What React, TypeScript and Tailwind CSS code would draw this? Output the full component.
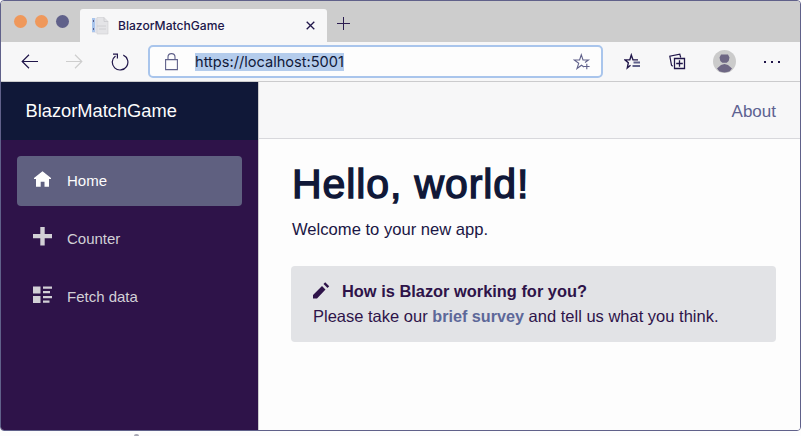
import React from "react";

const helv = "font-['Liberation_Sans',Arial,sans-serif]";
const ui = "font-['Inter',sans-serif]";

function TitleBar() {
  return (
    <div className="flex h-[41px] items-end bg-[#cdcdcd]">
      <div className="flex h-full w-[79px] items-start gap-[8px] pl-[13px] pt-[14px]">
        <span className="h-[13px] w-[13px] rounded-full bg-[#ef985b]" />
        <span className="h-[13px] w-[13px] rounded-full bg-[#ef985b]" />
        <span className="h-[13px] w-[13px] rounded-full bg-[#60618a]" />
      </div>
      <div className="flex h-[33px] w-[247px] items-center rounded-t-[3px] bg-[#f7f7f8]">
        <svg className="ml-[12px] h-[18px] w-[17px] shrink-0" viewBox="0 0 17 18">
          <path d="M0 1h8v15H0z" fill="#e3e4ec" />
          <path d="M0 1h3v14H0z" fill="#a9c5ec" />
          <path d="M1 3h1v2H1zM1 11h1v2H1z" fill="#60618a" />
          <path d="M5 .5h7l4 4V17H5z" fill="#e4e4e7" stroke="#d2d2d5" strokeWidth=".7" />
          <path d="M12 .5v4h4M5 9h9M7 12h7" fill="none" stroke="#c9c9ce" strokeWidth=".8" />
        </svg>
        <span className={`${ui} ml-[9px] whitespace-nowrap text-[12.1px] font-medium leading-[16px] text-[#20164a]`}>
          BlazorMatchGame
        </span>
        <svg className="ml-auto mr-[12px] h-[9px] w-[9px] shrink-0" viewBox="0 0 9 9">
          <path d="M.7.7l7.6 7.6M8.3.7L.7 8.3" stroke="#20164a" strokeWidth="1.3" />
        </svg>
      </div>
      <svg className="mb-[12px] ml-[10px] h-[13px] w-[13px]" viewBox="0 0 13 13">
        <path d="M6.5 0v13M0 6.5h13" stroke="#2b1c50" strokeWidth="1" />
      </svg>
    </div>
  );
}

function Toolbar() {
  return (
    <div className="flex h-[40px] items-center border-b border-[#cbcbcd] bg-[#f7f7f8]">
      <svg className="ml-[20px] h-[15px] w-[17px] shrink-0" viewBox="0 0 17 15">
        <path d="M8 .8L1.2 7.5 8 14.2M1.2 7.5H17" fill="none" stroke="#20164a" strokeWidth="1.2" />
      </svg>
      <svg className="ml-[28px] h-[15px] w-[17px] shrink-0" viewBox="0 0 17 15">
        <path d="M9 .8l6.8 6.7L9 14.2M15.8 7.5H0" fill="none" stroke="#cecece" strokeWidth="1.2" />
      </svg>
      <svg className="ml-[28px] h-[18px] w-[18px] shrink-0" viewBox="0 0 18 18">
        <path d="M12.3 2.1A7.8 7.8 0 1 1 4.5 2.9M2 1.1h4.4v4.3" fill="none" stroke="#20164a" strokeWidth="1.2" />
      </svg>
      <div className="ml-[19px] flex h-[33px] w-[455px] shrink-0 items-center rounded-[5px] border-2 border-[#a9c5ec] bg-[#fdfdfd]">
        <svg className="ml-[15px] h-[18px] w-[13px] shrink-0" viewBox="0 0 13 18">
          <path d="M.6 6.6h11.8v10H.6zM3 6.6V4.1a3.5 3.5 0 0 1 7 0v2.5" fill="none" stroke="#60618a" strokeWidth="1.1" />
        </svg>
        <span className={`${ui} ml-[17px] whitespace-nowrap bg-[#b4ccec] text-[14.6px] leading-[18px] text-[#101838]`}>
          https://localhost:5001
        </span>
        <svg className="ml-auto mr-[10px] h-[17px] w-[18px] shrink-0" viewBox="0 0 18 17">
          <path d="M11 14l-2.5-1.8L4 15.5l1.7-5.2L1.2 7h5.4L8.3 1.8 10 7h5.4L12 9.5" fill="none" stroke="#60618a" strokeWidth="1.1" />
          <path d="M13.8 10.7v5.6M11 13.5h5.6" stroke="#60618a" strokeWidth="1.1" />
        </svg>
      </div>
      <svg className="ml-[21px] h-[17px] w-[17px] shrink-0" viewBox="0 0 17 17">
        <path d="M6.5 12.2L3.3 15l1-5.2L1 6.9h4.8L7.3 2l1.7 4.9H14" fill="none" stroke="#20164a" strokeWidth="1.4" />
        <path d="M9.5 9.5H16M8.5 13H16" stroke="#60618a" strokeWidth="1.8" />
      </svg>
      <svg className="ml-[28px] h-[17px] w-[17px] shrink-0" viewBox="0 0 17 17">
        <path d="M5.5 5.5h10v10h-10zM10.5 7.2v6.6M7.2 10.5h6.6" fill="none" stroke="#20164a" strokeWidth="1.3" />
        <path d="M3.7 13.2L2.5 12.2.8 3.2l10-2 .9 3.3" fill="none" stroke="#20164a" strokeWidth="1.2" />
      </svg>
      <svg className="ml-[27px] h-[23px] w-[23px] shrink-0" viewBox="0 0 23 23">
        <circle cx="11.5" cy="11.5" r="11.5" fill="#cbcbcb" />
        <path d="M8 4.5h7l1.5 3-.8 3.5-2 1.8H9.3l-2-1.8-.8-3.5zM8 15l3.5-1 3.5 1 4 3.5-2.5 3-5 1-5-1L4 18.5z" fill="#6e6784" />
      </svg>
      <span className="ml-[28px] flex gap-[5px]">
        <i className="h-[2px] w-[2px] bg-[#20164a]" />
        <i className="h-[2px] w-[2px] bg-[#20164a]" />
        <i className="h-[2px] w-[2px] bg-[#20164a]" />
      </span>
    </div>
  );
}

function NavItem({ label, active, children }: { label: string; active?: boolean; children: React.ReactNode }) {
  return (
    <a
      className={`flex h-[50px] items-center rounded-[4px] pl-[16px] text-[15px] leading-[20px] ${
        active ? "bg-[#5f6080] text-[#fdfdfd]" : "text-[#d2d0d6]"
      }`}
    >
      <svg className="mb-[5px] h-[19px] w-[19px] shrink-0 fill-current" viewBox="0 0 19 19">
        {children}
      </svg>
      <span className="mb-[1px] ml-[15px]">{label}</span>
    </a>
  );
}

function Sidebar() {
  return (
    <aside className="flex w-[257px] shrink-0 flex-col bg-[#2e1349]">
      <div className="flex h-[58px] items-center bg-[#101838] pl-[24.5px] text-[18.3px] text-[#fdfdfd]">BlazorMatchGame</div>
      <nav className="flex flex-col gap-[8px] px-[16px] pt-[16px]">
        <NavItem label="Home" active>
          <path d="M9.5 2.3l8.5 6.7v1h-2v7.7h-4.5v-5H7.7v5H3V10H1V9z" />
        </NavItem>
        <NavItem label="Counter">
          <path d="M7.3 0h4.4v7H19v4.3h-7.3V18.5H7.3v-7.2H0V7h7.3z" />
        </NavItem>
        <NavItem label="Fetch data">
          <path d="M0 1.5h7.5v7H0zM0 11h7.5v7H0zM10 1.5h9v2.2h-9zM10 6h7v2.2h-7zM10 11h9v2.2h-9zM10 15.6h6.5v2.2H10z" />
        </NavItem>
      </nav>
    </aside>
  );
}

function Content() {
  return (
    <main className="flex flex-1 flex-col border-l border-[#cbcbcd] bg-[#fdfdfd]">
      <div className="flex h-[57px] items-center justify-end border-b border-[#d8d8dc] bg-[#f7f7f8] pr-[24px] pt-[3px] text-[17px] text-[#5d6291]">
        About
      </div>
      <div className="px-[33px] pr-[24px] pt-[21px]">
        <h1 className="whitespace-nowrap text-[41px] leading-[49px] tracking-[0.9px] text-[#101838] [-webkit-text-stroke:1.4px_#101838]">
          Hello, world!
        </h1>
        <p className="mt-[8px] text-[16.6px] leading-[25px] text-[#1a1644]">Welcome to your new app.</p>
        <div className="-ml-px mt-[24px] h-[76px] rounded-[4px] bg-[#e2e3e6] pl-[22px] pt-[13px] text-[16.5px] leading-[25px] text-[#2e1349]">
          <div className="flex items-center">
            <svg className="mb-[3px] h-[17px] w-[17px] shrink-0 fill-current" viewBox="0 0 17 17">
              <path d="M0 13l9-9 3.5 3.5L4 16.5H0zM10.5 2L12.2.3l4 4L14.5 6z" />
            </svg>
            <strong className="ml-[12px] whitespace-nowrap text-[16.4px]">How is Blazor working for you?</strong>
          </div>
          <div className="whitespace-nowrap">
            Please take our <a className="text-[16.2px] font-bold text-[#5d6899]">brief survey</a> and tell us what you think.
          </div>
        </div>
      </div>
    </main>
  );
}

export default function App() {
  return (
    <div className={`${helv} h-[436px] w-[801px] overflow-hidden bg-[#fdfdfd]`}>
      <div className="flex h-[431px] w-[801px] flex-col overflow-hidden rounded-[4px] border border-[#60618a]">
        <TitleBar />
        <Toolbar />
        <div className="flex flex-1">
          <Sidebar />
          <Content />
        </div>
      </div>
      <div className="ml-[134px] mt-[3px] h-[2px] w-[5px] rounded-t-full bg-[#a9a9b5]" />
    </div>
  );
}
